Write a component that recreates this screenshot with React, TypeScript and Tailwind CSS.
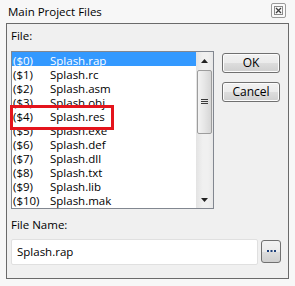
import React from "react";

const files = [
  ["($0)", "Splash.rap"],
  ["($1)", "Splash.rc"],
  ["($2)", "Splash.asm"],
  ["($3)", "Splash.obj"],
  ["($4)", "Splash.res"],
  ["($5)", "Splash.exe"],
  ["($6)", "Splash.def"],
  ["($7)", "Splash.dll"],
  ["($8)", "Splash.txt"],
  ["($9)", "Splash.lib"],
  ["($10)", "Splash.mak"],
];

function Button({ label, className = "" }: { label: string; className?: string }) {
  return (
    <div
      className={
        "flex items-center justify-center rounded-[3px] border border-[#707070] text-[12px] text-black " +
        "bg-[linear-gradient(#f2f2f2_0%,#ebebeb_50%,#dddddd_51%,#cfcfcf_100%)] shadow-[inset_0_0_0_1px_#fcfcfc] " +
        className
      }
    >
      {label}
    </div>
  );
}

export default function App() {
  return (
    <div
      className="relative w-[295px] h-[286px] overflow-hidden bg-[#f7f7f7] text-black"
      style={{ fontFamily: '"Open Sans", "Noto Sans", sans-serif' }}
    >
      {/* title bar */}
      <div className="flex h-[23px] items-center pl-[8px] pr-[9px]">
        <span className="flex-1 text-[11.5px] leading-none text-black">Main Project Files</span>
        <div className="mt-[-2px] flex h-[15px] w-[15px] items-center justify-center rounded-[2px] border border-[#9a9a9a] bg-[#fafafa]">
          <svg width="9" height="9" viewBox="0 0 9 9">
            <rect x="0.5" y="0.5" width="8" height="8" fill="none" stroke="#8a8a8a" strokeWidth="1" />
            <path d="M2 2 L7 7 M7 2 L2 7" stroke="#404040" strokeWidth="1.3" />
          </svg>
        </div>
      </div>

      {/* body */}
      <div className="ml-[6px] flex h-[256px] w-[283px] flex-col border border-[#6a6a6a] bg-[#f0f0f0] pl-[4px]">
        <div className="mt-[5px] h-[14px] text-[11.5px] leading-[14px]">File:</div>

        <div className="mt-[8px] flex items-start">
          {/* list box */}
          <div className="flex h-[158px] w-[203px] border border-[#828790] bg-white">
            <div className="flex w-[184px] flex-col">
              {files.map(([n, f], i) => (
                <div
                  key={n}
                  className={
                    "flex h-[14px] items-center pl-[1px] text-[11.5px] leading-[13px] " +
                    (i === 0 ? "bg-[#3399ff] text-white" : "text-black")
                  }
                >
                  <span className="relative top-[1px] w-[37px] shrink-0">{n}</span>
                  <span className="relative top-[1px]">{f}</span>
                </div>
              ))}
            </div>
            {/* scrollbar */}
            <div className="flex w-[17px] flex-col bg-[linear-gradient(90deg,#e3e3e3,#f0f0f0_40%,#f0f0f0_70%,#e8e8e8)]">
              <div className="flex h-[17px] items-center justify-center">
                <svg width="7" height="4" viewBox="0 0 7 4">
                  <path d="M0 4 L3.5 0 L7 4 Z" fill="#222" />
                </svg>
              </div>
              <div className="mx-[1px] mt-[1px] flex h-[64px] items-center justify-center rounded-[2px] border border-[#9d9d9d] bg-[linear-gradient(90deg,#f3f3f3,#e6e6e6_50%,#d6d6d6)]">
                <svg width="7" height="6" viewBox="0 0 7 6">
                  <path d="M0 0.5 H7 M0 2.5 H7 M0 4.5 H7" stroke="#3a3a3a" strokeWidth="1" />
                </svg>
              </div>
              <div className="flex-1" />
              <div className="flex h-[17px] items-center justify-center">
                <svg width="7" height="4" viewBox="0 0 7 4">
                  <path d="M0 0 L3.5 4 L7 0 Z" fill="#222" />
                </svg>
              </div>
            </div>
          </div>

          {/* buttons */}
          <div className="ml-[8px] mt-[2px] flex flex-col gap-[9px]">
            <Button label="OK" className="h-[20px] w-[58px]" />
            <Button label="Cancel" className="h-[20px] w-[58px]" />
          </div>
        </div>

        <div className="mt-[9px] h-[14px] text-[11.5px] leading-[14px]">File Name:</div>

        <div className="mt-[7px] flex items-start">
          <div className="flex h-[26px] w-[247px] items-center rounded-[2px] border border-[#e0e0e0] bg-white pl-[5px] text-[11.5px]">
            Splash.rap
          </div>
          <div className="ml-[3px] mt-[1px] flex h-[23px] w-[20px] items-center justify-center rounded-[3px] border border-[#707070] bg-[linear-gradient(#f2f2f2_0%,#ebebeb_50%,#dddddd_51%,#cfcfcf_100%)]">
            <svg width="9" height="3" viewBox="0 0 9 3">
              <rect x="0" y="0" width="2" height="2" fill="#1d3f7a" />
              <rect x="3.5" y="0" width="2" height="2" fill="#1d3f7a" />
              <rect x="7" y="0" width="2" height="2" fill="#1d3f7a" />
            </svg>
          </div>
        </div>
      </div>

      {/* red highlight box */}
      <div className="absolute left-[10px] top-[105px] h-[25px] w-[104px] border-[3px] border-[#e4141c]" />
    </div>
  );
}
